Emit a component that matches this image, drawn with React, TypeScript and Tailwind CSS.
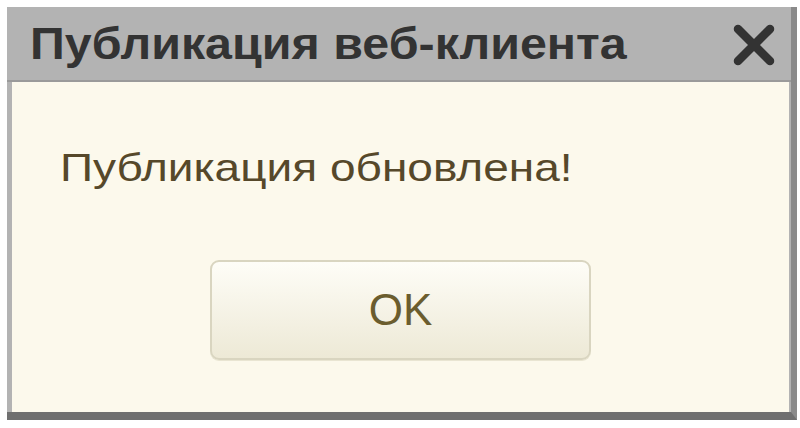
import React from "react";

// Component.
export default function App(): React.ReactNode {
  return (
    <div className="w-[800px] h-[428px] overflow-hidden bg-white pt-[7px] pl-[7px] pr-[3px] pb-[8px] font-['Liberation_Sans',Arial,sans-serif]">
      <div className="flex flex-col h-full bg-[#b3b3b3] border-r-[6px] border-r-[#8a8a8a] border-b-[8px] border-b-[#6f6f6f]">
        {/* Title bar */}
        <div className="flex items-center justify-between h-[75px] pl-[23px] pr-[12px] border-b-2 border-b-[#9a9a9a]">
          <span className="inline-block origin-left scale-x-[1.1] text-[44px] font-bold text-[#333333] leading-none">Публикация веб-клиента</span>
          <svg width="50" height="50" viewBox="0 0 50 50" className="mt-[2px]">
            <path d="M9 9 L41 41 M41 9 L9 41" stroke="#333333" strokeWidth="8.5" strokeLinecap="round" />
          </svg>
        </div>

        {/* Body */}
        <div className="flex-1 flex flex-col items-start ml-[5px] mr-[2px] bg-[#fcf9ec]">
          <p className="w-fit mt-[66px] ml-[48px] origin-left scale-x-[1.18] text-[39px] leading-none text-[#56482a]">Публикация обновлена!</p>
          <div className="flex justify-center self-stretch mt-[73px]">
            <button className="w-[381px] h-[100px] rounded-[9px] border-2 border-[#d9d5c0] bg-gradient-to-b from-[#fefdf7] to-[#ede9d6] text-[44px] text-[#6b5d2e] shadow-[0_1px_0_#e9e5d2]">
              OK
            </button>
          </div>
        </div>
      </div>
    </div>
  );
}
